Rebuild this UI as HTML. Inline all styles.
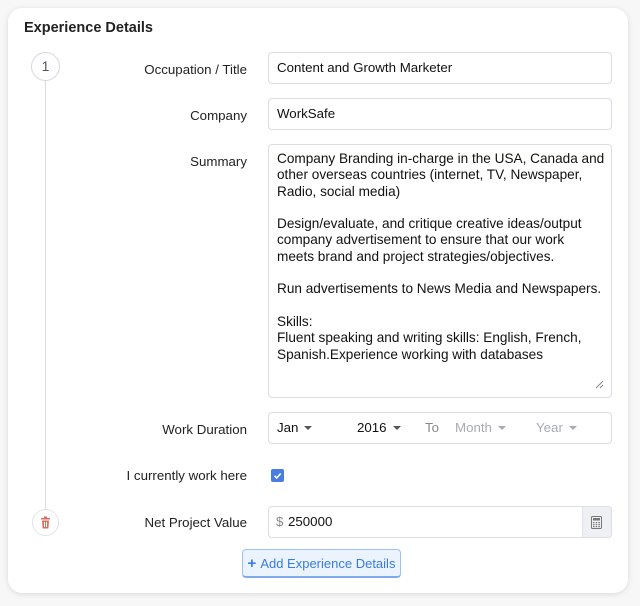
<!DOCTYPE html>
<html><head><meta charset="utf-8">
<style>
*{box-sizing:border-box;margin:0;padding:0}
body{width:640px;height:606px;background:#f7f7f8;font-family:"Liberation Sans",sans-serif;color:#222;position:relative;overflow:hidden}
.card{position:absolute;left:8px;top:8px;width:620px;height:585px;background:#fff;border-radius:14px;box-shadow:0 1px 6px rgba(0,0,0,.12)}
.abs{position:absolute}
h1{position:absolute;left:24px;top:20px;font-size:14.5px;font-weight:bold;color:#222}
.lbl{position:absolute;right:393px;font-size:13.3px;color:#222;text-align:right;white-space:nowrap}
.inp{position:absolute;left:268px;width:344px;border:1px solid #dcdde3;border-radius:4px;background:#fff;font-size:13.3px;color:#111}
.txt{padding-left:8px;line-height:30px}
.dd{position:absolute;top:0;line-height:30px;font-size:13.3px}
.tri{display:inline-block;width:0;height:0;border-left:4px solid transparent;border-right:4px solid transparent;border-top:4px solid #555;vertical-align:middle;margin-left:6px}
.g{color:#a9abb3}.g .tri{border-top-color:#a9abb3}
</style></head><body>
<div class="card"></div>
<h1>Experience Details</h1>
<div class="abs" style="left:45px;top:80px;width:1px;height:430px;background:#dcdde3"></div>
<div class="abs" style="left:31px;top:52px;width:29px;height:29px;border:1px solid #d8d9e0;border-radius:50%;background:#fff;text-align:center;line-height:27px;font-size:14px;color:#555">1</div>
<div class="abs" style="left:32px;top:509px;width:27px;height:27px;border:1px solid #e2e3e8;border-radius:50%;background:#fff"></div>
<svg class="abs" style="left:40px;top:516px" width="11" height="13" viewBox="0 0 11 13"><rect x="1" y="2" width="9" height="1.5" fill="#e06a63"/><rect x="4" y="0.5" width="3" height="1.5" fill="#e06a63"/><path d="M2 4.5h7l-0.6 8h-5.8z" fill="#e06a63"/><rect x="4" y="6" width="1" height="5" fill="#fff"/><rect x="6" y="6" width="1" height="5" fill="#fff"/></svg>

<div class="lbl" style="top:62px">Occupation / Title</div>
<div class="inp txt" style="top:52px;height:32px">Content and Growth Marketer</div>
<div class="lbl" style="top:108px">Company</div>
<div class="inp txt" style="top:98px;height:32px">WorkSafe</div>
<div class="lbl" style="top:154px">Summary</div>
<div class="inp" style="top:144px;height:254px;padding:6px 0 0 8px;line-height:16.3px;white-space:pre;font-size:13.6px">Company Branding in-charge in the USA, Canada and
other overseas countries (internet, TV, Newspaper,
Radio, social media)

Design/evaluate, and critique creative ideas/output
company advertisement to ensure that our work
meets brand and project strategies/objectives.

Run advertisements to News Media and Newspapers.

Skills:
Fluent speaking and writing skills: English, French,
Spanish.Experience working with databases</div>
<svg class="abs" style="left:595px;top:380px" width="9" height="9"><path d="M8 1L1 8M8 5L5 8" stroke="#888" stroke-width="1"/></svg>

<div class="lbl" style="top:422px">Work Duration</div>
<div class="inp" style="top:412px;height:32px">
 <div class="dd" style="left:8px">Jan<span class="tri"></span></div>
 <div class="dd" style="left:88px">2016<span class="tri"></span></div>
 <div class="dd g" style="left:156px;color:#888">To</div>
 <div class="dd g" style="left:186px">Month<span class="tri"></span></div>
 <div class="dd g" style="left:267px">Year<span class="tri"></span></div>
</div>
<div class="lbl" style="top:468px">I currently work here</div>
<div class="abs" style="left:271px;top:469px;width:13px;height:13px;background:#4a7ddf;border-radius:2px"></div>
<svg class="abs" style="left:271px;top:469px" width="13" height="13"><path d="M3.5 6.8l2.2 2.2 4-4.5" stroke="#fff" stroke-width="1.6" fill="none"/></svg>

<div class="lbl" style="top:515px">Net Project Value</div>
<div class="inp" style="top:506px;height:32px;overflow:hidden">
 <span style="position:absolute;left:7px;line-height:30px;color:#888">$</span>
 <span style="position:absolute;left:19px;line-height:30px">250000</span>
 <div style="position:absolute;right:0;top:0;width:29px;height:30px;background:#eef0f3;border-left:1px solid #e2e3e8"></div>
 <svg style="position:absolute;right:9px;top:9px" width="11" height="13" viewBox="0 0 11 13"><rect x="0.5" y="0.5" width="10" height="12" rx="1" fill="none" stroke="#777"/><rect x="2" y="2" width="7" height="2.5" fill="#777"/><g fill="#777"><rect x="2" y="6" width="1.5" height="1.2"/><rect x="4.7" y="6" width="1.5" height="1.2"/><rect x="7.4" y="6" width="1.5" height="1.2"/><rect x="2" y="8" width="1.5" height="1.2"/><rect x="4.7" y="8" width="1.5" height="1.2"/><rect x="7.4" y="8" width="1.5" height="1.2"/><rect x="2" y="10" width="1.5" height="1.2"/><rect x="4.7" y="10" width="1.5" height="1.2"/><rect x="7.4" y="10" width="1.5" height="1.2"/></g></svg>
</div>

<div class="abs" style="left:242px;top:549px;width:159px;height:29px;border:1px solid #9fc0f2;border-bottom:2px solid #7ea9ec;border-radius:4px;background:#eaf3fe;color:#3a7be0;font-size:13px;line-height:27px;text-align:center">
<span style="font-size:15px;font-weight:bold;margin-right:4px">+</span>Add Experience Details</div>
</body></html>
